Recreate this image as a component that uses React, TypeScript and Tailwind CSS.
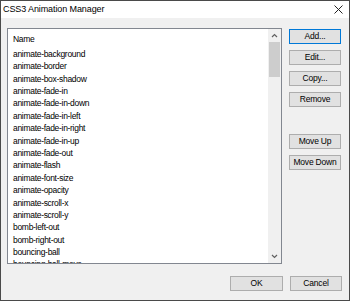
import React from 'react';

const items = [
  'animate-background',
  'animate-border',
  'animate-box-shadow',
  'animate-fade-in',
  'animate-fade-in-down',
  'animate-fade-in-left',
  'animate-fade-in-right',
  'animate-fade-in-up',
  'animate-fade-out',
  'animate-flash',
  'animate-font-size',
  'animate-opacity',
  'animate-scroll-x',
  'animate-scroll-y',
  'bomb-left-out',
  'bomb-right-out',
  'bouncing-ball',
  'bouncing-ball-move',
];

const font = { fontFamily: '"Liberation Sans", Arial, sans-serif' };

const Btn: React.FC<{ label: string; focused?: boolean; className?: string }> = ({ label, focused, className = '' }) => (
  <div
    className={`w-[52px] h-[15px] flex items-center justify-center text-[8.5px] tracking-[-0.2px] text-black bg-[#e1e1e1] border whitespace-nowrap ${
      focused ? 'border-[#0078d7]' : 'border-[#adadad]'
    } ${className}`}
  >
    {label}
  </div>
);

const App: React.FC = () => {
  return (
    <div className="w-[350px] h-[301px] border border-[#4a4a4a] bg-[#f0f0f0] flex flex-col overflow-hidden" style={font}>
      {/* Title bar */}
      <div className="h-[17px] bg-white flex items-center justify-between pl-[2px] pr-[6px] shrink-0">
        <span className="text-[9px] tracking-[-0.1px] text-black leading-none">CSS3 Animation Manager</span>
        <svg width="9" height="9" viewBox="0 0 9 9" className="text-[#222]">
          <path d="M0.5 0.5 L8.5 8.5 M8.5 0.5 L0.5 8.5" stroke="currentColor" strokeWidth="1" />
        </svg>
      </div>

      {/* Body */}
      <div className="flex pl-[6px] pt-[10px]">
        {/* List */}
        <div className="w-[275px] h-[236px] border border-[#828790] bg-white flex overflow-hidden">
          <div className="flex-1 pl-[5px] pt-[1px] overflow-hidden">
            <div className="h-[18px] flex items-center text-[8.5px] tracking-[-0.3px] text-black">Name</div>
            {items.map((it) => (
              <div key={it} className="h-[12.4px] flex items-center text-[8.5px] tracking-[-0.3px] text-black whitespace-nowrap">
                {it}
              </div>
            ))}
          </div>
          <div className="w-[13px] bg-[#f0f0f0] flex flex-col items-center">
            <div className="h-[13px] flex items-center justify-center">
              <svg width="7" height="5" viewBox="0 0 7 5">
                <path d="M1 4 L3.5 1.5 L6 4" stroke="#606060" strokeWidth="1.2" fill="none" />
              </svg>
            </div>
            <div className="w-[11px] h-[35px] bg-[#cdcdcd]" />
            <div className="flex-1" />
            <div className="h-[13px] flex items-center justify-center">
              <svg width="7" height="5" viewBox="0 0 7 5">
                <path d="M1 1 L3.5 3.5 L6 1" stroke="#606060" strokeWidth="1.2" fill="none" />
              </svg>
            </div>
          </div>
        </div>

        {/* Side buttons */}
        <div className="ml-[7px] mt-[1px] flex flex-col gap-[6px]">
          <Btn label="Add..." focused />
          <Btn label="Edit..." />
          <Btn label="Copy..." />
          <Btn label="Remove" />
          <Btn label="Move Up" className="mt-[21px]" />
          <Btn label="Move Down" />
        </div>
      </div>

      {/* Bottom buttons */}
      <div className="flex justify-end gap-[7px] pr-[7px] mt-[12px]">
        <Btn label="OK" className="w-[53px]" />
        <Btn label="Cancel" />
      </div>
    </div>
  );
};

export default App;
